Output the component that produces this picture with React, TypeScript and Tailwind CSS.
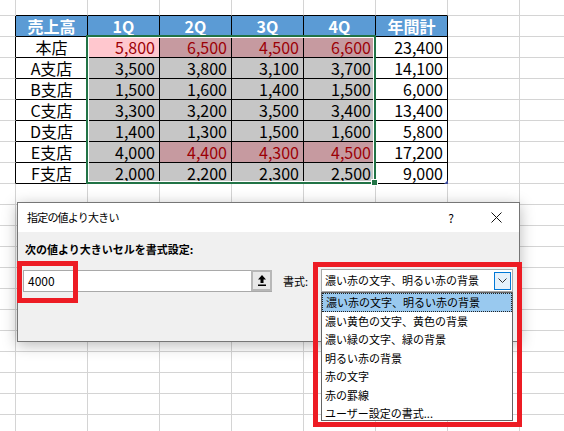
import React from 'react';

// Sales per branch and quarter
const header = ['売上高', '1Q', '2Q', '3Q', '4Q', '年間計'];

const rows: [string, number, number, number, number, number][] = [
  ['本店', 5800, 6500, 4500, 6600, 23400],
  ['A支店', 3500, 3800, 3100, 3700, 14100],
  ['B支店', 1500, 1600, 1400, 1500, 6000],
  ['C支店', 3300, 3200, 3500, 3400, 13400],
  ['D支店', 1400, 1300, 1500, 1600, 5800],
  ['E支店', 4000, 4400, 4300, 4500, 17200],
  ['F支店', 2000, 2200, 2300, 2500, 9000],
];

const formats = [
  '濃い赤の文字、明るい赤の背景',
  '濃い黄色の文字、黄色の背景',
  '濃い緑の文字、緑の背景',
  '明るい赤の背景',
  '赤の文字',
  '赤の罫線',
  'ユーザー設定の書式...',
];

const fmt = (n: number) => n.toLocaleString('en-US');

function Cell({ r, c }: { r: number; c: number }) {
  const inTable = r >= 1 && r <= 8 && c >= 1 && c <= 6;
  const rightBlack = inTable || (c === 0 && r >= 1 && r <= 8);
  const bottomBlack = inTable || (r === 0 && c >= 1 && c <= 6);
  const borders = `border-r border-b ${rightBlack ? 'border-r-black' : 'border-r-[#d4d4d4]'} ${
    bottomBlack ? 'border-b-black' : 'border-b-[#d4d4d4]'
  }`;

  if (!inTable) return <div className={borders} />;

  // header row
  if (r === 1) {
    return (
      <div className={`${borders} bg-[#5b9bd5] flex items-center justify-center text-white font-bold`}>
        {header[c - 1]}
      </div>
    );
  }

  const row = rows[r - 2];
  if (c === 1) {
    return <div className={`${borders} flex items-center justify-center`}>{row[0]}</div>;
  }

  const value = row[c - 1] as number;
  if (c === 6) {
    return (
      <div className={`${borders} relative flex items-center justify-end pr-1`}>
        {fmt(value)}
        {r === 8 && (
          <div className="absolute -right-[1px] -bottom-[1px] w-0 h-0 border-l-[4px] border-l-transparent border-b-[4px] border-b-[#3b4a9c]" />
        )}
      </div>
    );
  }

  // selected range, conditional format > 4000
  const hit = value > 4000;
  const active = r === 2 && c === 2;
  const bg = active ? 'bg-[#ffc7ce]' : hit ? 'bg-[#c69aa0]' : 'bg-[#c6c6c6]';
  return (
    <div className={`${borders} ${bg} flex items-center justify-end pr-1 ${hit ? 'text-[#9c0006]' : ''}`}>
      {fmt(value)}
    </div>
  );
}

export default function App() {
  const cells = [];
  for (let r = 0; r < 21; r++) {
    for (let c = 0; c < 9; c++) {
      cells.push(<Cell key={`${r}-${c}`} r={r} c={c} />);
    }
  }

  return (
    <div className="relative w-[564px] h-[431px] overflow-hidden bg-white text-black font-['Noto_Sans_CJK_JP',sans-serif]">
      {/* Sheet */}
      <div className="grid grid-cols-[16px_repeat(8,72px)] grid-rows-[16px_repeat(20,21px)] text-[16px] leading-[20px]">
        {cells}
      </div>

      {/* Selection frame + fill handle */}
      <div className="absolute left-[86px] top-[35px] w-[290px] h-[149px] border-2 border-[#217346] shadow-[inset_0_0_0_1px_white] pointer-events-none" />
      <div className="absolute left-[371px] top-[179px] w-[7px] h-[7px] bg-[#217346] border border-white" />

      {/* Dialog */}
      <div className="absolute left-[17px] top-[202px] w-[503px] h-[140px] border border-[#767676] bg-[#f0f0f0] flex flex-col shadow-[0_3px_14px_rgba(0,0,0,0.28)] text-[11px]">
        <div className="h-[29px] bg-white flex items-center pl-[9px]">
          <span className="text-[11px] tracking-[-0.8px]">指定の値より大きい</span>
          <span className="ml-auto mr-[37px] text-[12px]">?</span>
          <svg className="w-[11px] h-[11px] mr-[17px]" viewBox="0 0 11 11" fill="none" stroke="#111" strokeWidth={1}>
            <path d="M0.5 0.5 L10.5 10.5 M10.5 0.5 L0.5 10.5" />
          </svg>
        </div>

        <div className="flex-1">
          <div className="ml-[7px] mt-[9px] font-bold leading-[16px]">次の値より大きいセルを書式設定:</div>

          <div className="flex items-start pl-[5px] mt-[13px]">
            {/* Value input */}
            <div className="w-[249px] h-[22px] flex bg-white border border-[#a9a9a9]">
              <div className="flex-1 pl-[4px] text-[12px] leading-[20px]">4000</div>
              <div className="w-[21px] h-[21px] -mt-[1px] -mr-[1px] border-2 border-[#b7b7b7] bg-[#e8e8e8] flex items-center justify-center">
                <svg width="8" height="11" viewBox="0 0 8 11">
                  <path d="M4 0 L8 4.5 H5.5 V8 H2.5 V4.5 H0 Z" fill="#000" />
                  <rect x="0" y="9.5" width="8" height="1.5" fill="#000" />
                </svg>
              </div>
            </div>

            <div className="ml-[11px] w-[38px] leading-[22px]">書式:</div>

            {/* Format combo with open list */}
            <div className="relative -mt-[1px]">
              <div className="w-[192px] h-[23px] flex items-center justify-between bg-white border border-[#a9a9a9] pl-[3px] pr-[1px]">
                <span>濃い赤の文字、明るい赤の背景</span>
                <div className="w-[17px] h-[18px] border border-[#0078d7] bg-[#e5f1fb] flex items-center justify-center">
                  <svg width="9" height="5" viewBox="0 0 9 5" fill="none" stroke="#333" strokeWidth={1}>
                    <path d="M0.5 0.5 L4.5 4.5 L8.5 0.5" />
                  </svg>
                </div>
              </div>
              <div className="absolute left-0 top-full w-[192px] h-[129px] bg-white border border-[#646464] flex flex-col">
                {formats.map((f, i) => (
                  <div
                    key={f}
                    className={`h-[18.5px] shrink-0 flex items-center pl-[3px] ${
                      i === 0 ? 'bg-[#99c9ef] border border-dotted border-[#222]' : ''
                    }`}
                  >
                    {f}
                  </div>
                ))}
              </div>
            </div>
          </div>
        </div>
      </div>

      {/* Red annotation boxes */}
      <div className="absolute left-[17px] top-[261px] w-[61px] h-[42px] border-[5px] border-[#ed1c24]" />
      <div className="absolute left-[313px] top-[262px] w-[209px] h-[165px] border-[5px] border-[#ed1c24]" />
    </div>
  );
}
